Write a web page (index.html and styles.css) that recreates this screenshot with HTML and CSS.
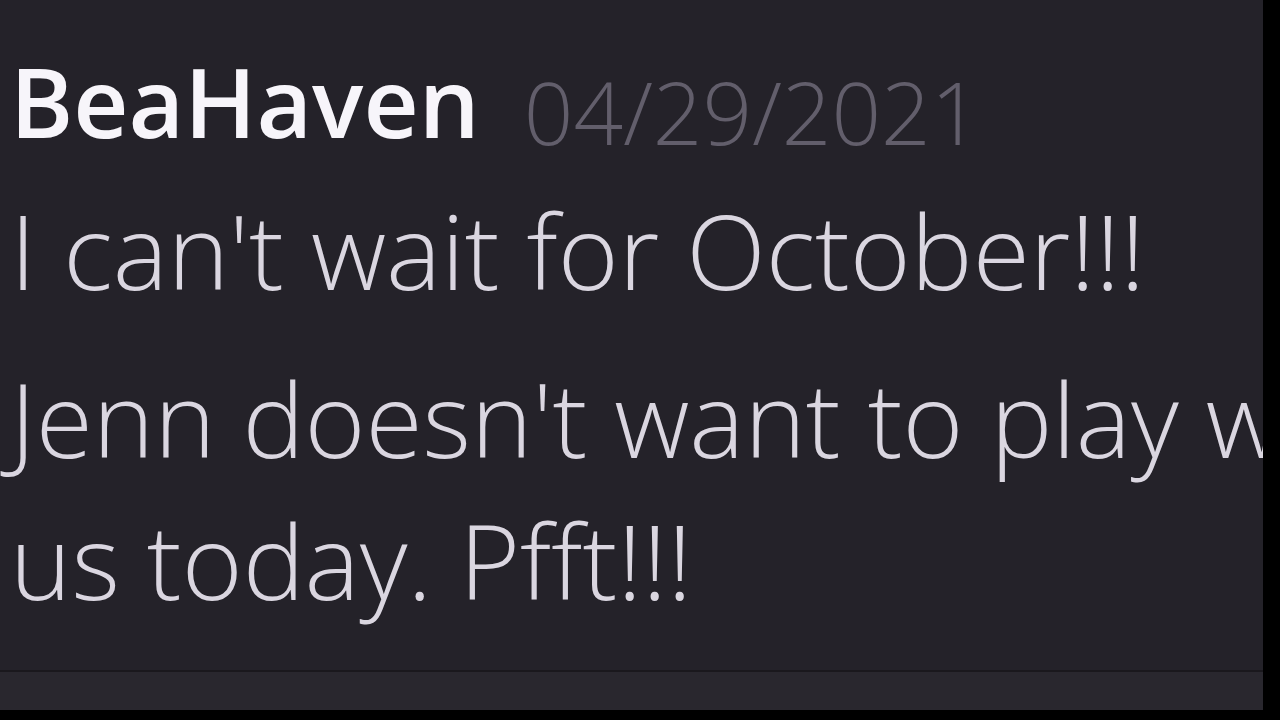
FILE: index.html
```html
<!DOCTYPE html>
<html lang="en">
<head>
    <meta charset="UTF-8">
    <meta name="viewport" content="width=device-width, initial-scale=1.0">
    <title>BeaHaven</title>
    <link rel="stylesheet" href="styles.css">
</head>
<body>

    <div class="frame">
        <div class="chat">
            <div class="messages">
                <div class="message-head">
                    <span class="author">BeaHaven</span>
                    <span class="timestamp">04/29/2021</span>
                </div>
                <p class="line first">I can't wait for October!!!</p>
                <p class="line">Jenn doesn't want to play with us today. Pfft!!!</p>
            </div>
            <div class="composer"></div>
        </div>
    </div>

</body>
</html>
```

FILE: styles.css
```css
body {
    margin: 0;
    background-color: #000;
    font-family: "Open Sans", "Noto Sans", sans-serif;
    overflow: hidden;
}

.frame {
    width: 1280px;
    height: 720px;
    display: flex;
    background-color: #000;
}

.chat {
    width: 1263px;
    height: 710px;
    display: flex;
    flex-direction: column;
    overflow: hidden;
    background-color: #242229;
}

.messages {
    flex: 1;
    overflow: hidden;
    padding: 33px 0 0 10px;
}

.message-head {
    height: 146px;
    line-height: 136px;
    white-space: nowrap;
}

.author {
    color: #f7f5fa;
    font-size: 96px;
    font-weight: 600;
}

.timestamp {
    margin-left: 40px;
    color: #625e6b;
    font-size: 87px;
    font-weight: 300;
    vertical-align: -7px;
}

.line {
    margin: 0;
    width: 1480px;
    color: #dad6e0;
    font-size: 104px;
    font-weight: 300;
    line-height: 142px;
}

.line.first {
    margin-bottom: 26px;
}

.composer {
    height: 38px;
    border-top: 2px solid #1a181d;
    background-color: #29272e;
}
```
